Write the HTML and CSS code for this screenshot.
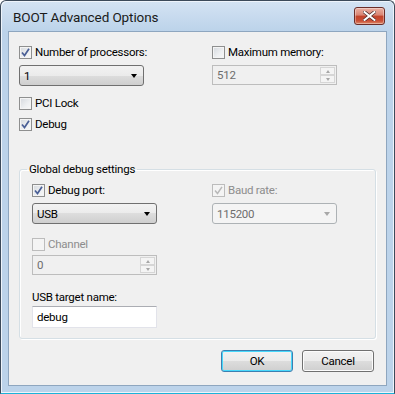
FILE: index.html
```html
<!DOCTYPE html>
<html>
<head>
<meta charset="utf-8">
<link rel="stylesheet" href="styles.css">
</head>
<body>
<div class="window">
  <div class="titlebar">
    <span class="title">BOOT Advanced Options</span>
    <div class="close">
      <svg width="13" height="10" viewBox="0 0 13 10"><path d="M1.5 1 L11.5 9 M11.5 1 L1.5 9" stroke="#4a2a2a" stroke-width="3.4" stroke-linecap="square"/><path d="M1.5 1 L11.5 9 M11.5 1 L1.5 9" stroke="#ffffff" stroke-width="2" stroke-linecap="square"/></svg>
    </div>
  </div>
  <div class="client">
    <div class="pair">
      <div class="col">
        <div class="check"><span class="box on"><svg width="9" height="9" viewBox="0 0 9 9"><path d="M1 4.5 L3.5 7.5 L8 0.8" fill="none" stroke="#4a5f96" stroke-width="1.7"/></svg></span><span>Number of processors:</span></div>
        <div class="combo"><span>1</span><span class="arrow"></span></div>
      </div>
      <div class="col">
        <div class="check"><span class="box"></span><span>Maximum memory:</span></div>
        <div class="spin"><span class="val">512</span><div class="spinbtns"><span class="sb"><i class="up"></i></span><span class="sb"><i class="dn"></i></span></div></div>
      </div>
    </div>
    <div class="checks">
      <div class="check"><span class="box"></span><span>PCI Lock</span></div>
      <div class="check"><span class="box on"><svg width="9" height="9" viewBox="0 0 9 9"><path d="M1 4.5 L3.5 7.5 L8 0.8" fill="none" stroke="#4a5f96" stroke-width="1.7"/></svg></span><span>Debug</span></div>
    </div>
    <fieldset class="group">
      <legend>Global debug settings</legend>
      <div class="pair gpair">
        <div class="col">
          <div class="check"><span class="box on"><svg width="9" height="9" viewBox="0 0 9 9"><path d="M1 4.5 L3.5 7.5 L8 0.8" fill="none" stroke="#4a5f96" stroke-width="1.7"/></svg></span><span>Debug port:</span></div>
          <div class="combo"><span>USB</span><span class="arrow"></span></div>
        </div>
        <div class="col">
          <div class="check dis"><span class="box"><svg width="9" height="9" viewBox="0 0 9 9"><path d="M1 4.5 L3.5 7.5 L8 0.8" fill="none" stroke="#b8b8b8" stroke-width="1.5"/></svg></span><span>Baud rate:</span></div>
          <div class="combo disabled"><span>115200</span><span class="arrow"></span></div>
        </div>
      </div>
      <div class="col channel">
        <div class="check dis"><span class="box"></span><span>Channel</span></div>
        <div class="spin"><span class="val">0</span><div class="spinbtns"><span class="sb"><i class="up"></i></span><span class="sb"><i class="dn"></i></span></div></div>
      </div>
      <div class="col target">
        <span class="lbl">USB target name:</span>
        <div class="textbox">debug</div>
      </div>
    </fieldset>
    <div class="buttons">
      <div class="btn default">OK</div>
      <div class="btn">Cancel</div>
    </div>
  </div>
</div>
</body>
</html>
```
FILE: styles.css
```css
* { box-sizing: border-box; }
html, body { margin: 0; padding: 0; background: #ffffff; }
body { font-family: Roboto, "Open Sans", sans-serif; font-size: 11.5px; letter-spacing: -0.25px; color: #000; }

.window {
  width: 395px;
  height: 394px;
  border: 1px solid #3c4a5a;
  border-radius: 6px 6px 0 0;
  background: linear-gradient(to bottom, #d4e3f3 0px, #bcd3ea 30px, #bcd3ea 100%);
  display: flex;
  flex-direction: column;
  box-shadow: inset 1px 1px 0 #eef4fb, inset -1px -1px 0 #eef4fb;
  border-bottom: 1px solid #1bb3d9;
}
.titlebar {
  height: 30px;
  flex: none;
  display: flex;
  align-items: center;
  justify-content: space-between;
  padding: 0 9px 0 12px;
}
.title { font-size: 13.5px; letter-spacing: -0.1px; color: #1a1a1a; margin-top: 1px; }
.close {
  width: 31px;
  height: 18px;
  margin-top: -1px;
  border: 1px solid #6b2d28;
  border-radius: 3px;
  background: linear-gradient(to bottom, #eab0a2 0%, #d98473 45%, #c2432b 50%, #c94f36 80%, #de8c6c 100%);
  display: flex;
  align-items: center;
  justify-content: center;
  box-shadow: inset 0 0 0 1px rgba(255,255,255,0.35);
}
.client {
  flex: 1;
  margin: 0 7px 7px 7px;
  background: #f0f0f0;
  border: 1px solid #8ea6bf;
  padding: 12px 10px 0 10px;
  display: flex;
  flex-direction: column;
}
.pair { display: grid; grid-template-columns: 193px 1fr; }
.gpair { grid-template-columns: 180px 1fr; }
.col { display: flex; flex-direction: column; gap: 5px; }
.check { display: flex; align-items: center; gap: 3px; height: 16px; white-space: nowrap; }
.check.dis { color: #8d8d8d; }
.box {
  width: 13px; height: 13px;
  border: 1px solid #8e8f8f;
  background: linear-gradient(135deg, #d4d8dd 0%, #eef0f2 60%, #f8f8f8 100%);
  box-shadow: inset 0 0 0 1px #f4f4f4;
  display: flex; align-items: center; justify-content: center;
  flex: none;
}
.check.dis .box { border-color: #bcbcbc; background: #f4f4f4; }
.combo {
  width: 125px; height: 21px;
  border: 1px solid #707070;
  border-radius: 3px;
  background: linear-gradient(to bottom, #f2f2f2 0%, #ebebeb 50%, #dddddd 50%, #cfcfcf 100%);
  display: flex; align-items: center; justify-content: space-between;
  padding: 0 6px 0 4px;
}
.arrow { width: 0; height: 0; border-left: 3.5px solid transparent; border-right: 3.5px solid transparent; border-top: 4px solid #000; }
.combo.disabled { border-color: #adb2b5; background: #f4f4f4; color: #6d6d6d; }
.combo.disabled .arrow { border-top-color: #a8a8a8; }
.spin {
  width: 125px; height: 20px;
  border: 1px solid #bdbdbd;
  background: #f0f0f0;
  color: #6d6d6d;
  display: flex; align-items: center; justify-content: space-between;
  padding: 0 1px 0 4px;
}
.spinbtns { display: flex; flex-direction: column; gap: 0; }
.sb { width: 15px; height: 8px; border: 1px solid #d6d6d6; background: #f4f4f4; display: flex; align-items: center; justify-content: center; }
.sb i { width: 0; height: 0; border-left: 2.5px solid transparent; border-right: 2.5px solid transparent; }
.sb .up { border-bottom: 3px solid #a6a6a6; }
.sb .dn { border-top: 3px solid #a6a6a6; }
.checks { display: flex; flex-direction: column; gap: 5px; margin-top: 9px; }
.group {
  margin: 30px 0 0 0;
  border: 1px solid #d5dfe5;
  border-radius: 3px;
  box-shadow: inset 1px 1px 0 #fff, 1px 1px 0 #fff;
  padding: 6px 12px 10px 12px;
  height: 177px;
  min-width: 0;
}
.group legend { padding: 0 2px; margin-left: -5px; color: #000; }
.channel { margin-top: 12px; gap: 3px; }
.target { margin-top: 15px; gap: 2px; }
.textbox { width: 125px; height: 22px; border: 1px solid #e2e3ea; border-top-color: #abadb3; background: #fff; padding: 3px 4px; }
.buttons { display: flex; justify-content: flex-end; gap: 9px; margin-top: 11px; padding-right: 2px; }
.btn {
  width: 72px; height: 22px;
  border: 1px solid #707070;
  border-radius: 3px;
  background: linear-gradient(to bottom, #f2f2f2 0%, #ebebeb 50%, #dddddd 50%, #cfcfcf 100%);
  display: flex; align-items: center; justify-content: center;
  box-shadow: inset 0 0 0 1px #fcfcfc;
}
.btn.default { border-color: #3c7fb1; box-shadow: inset 0 0 0 1px #48d8fb; }
```
